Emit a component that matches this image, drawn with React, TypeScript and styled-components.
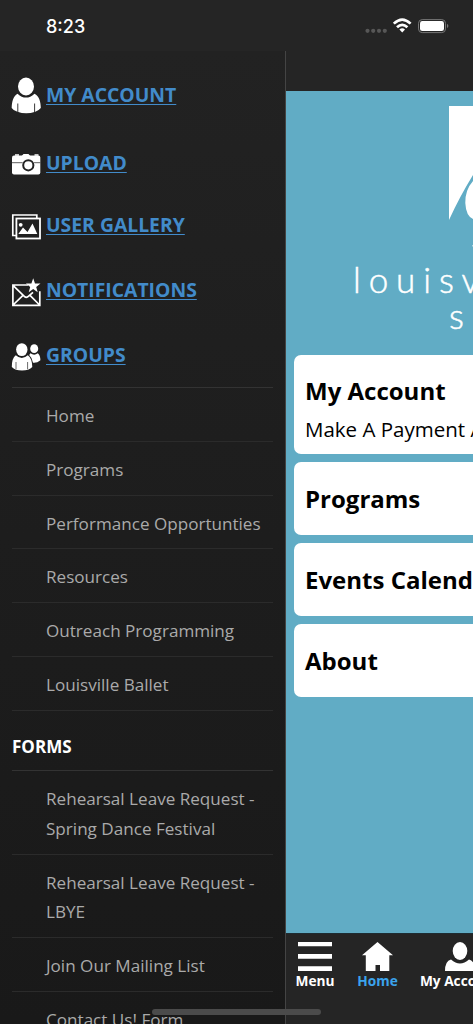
import React from "react";
import styled, { createGlobalStyle } from "styled-components";

const Global = createGlobalStyle`
  * { box-sizing: border-box; }
  body { margin: 0; background: #252525; font-family: "Open Sans", sans-serif; overflow: hidden; }
`;

const Screen = styled.div`
  position: relative;
  width: 473px;
  height: 1024px;
  overflow: hidden;
  display: flex;
  flex-direction: column;
  background: #252525;
`;

const StatusBar = styled.header`
  height: 51px;
  flex: none;
  display: flex;
  align-items: flex-start;
  justify-content: space-between;
  padding: 0 24px 0 46px;
`;

const Clock = styled.time`
  margin-top: 15px;
  font: 500 18px/24px Inter, sans-serif;
  letter-spacing: 0;
  color: #fff;
`;

const StatusIcons = styled.svg`
  display: block;
  margin-top: 16px;
  width: 84px;
  height: 20px;
`;

const Body = styled.div`
  flex: 1;
  min-height: 0;
  display: flex;
`;

const Drawer = styled.nav`
  width: 286px;
  flex: none;
  overflow: hidden;
  padding: 0 12px;
  background: linear-gradient(#222222, #1d1d1d 50%, #191919);
  border-right: 1px solid #444;
`;

const Shortcuts = styled.div`
  height: 337px;
  border-bottom: 1px solid #333;
`;

const Shortcut = styled.a<{ $h: number }>`
  height: ${(p) => p.$h}px;
  display: flex;
  align-items: center;
  color: #428bca;
  font-size: 19.35px;
  font-weight: 700;
  line-height: 28px;
  text-decoration: none;
  svg { width: 30px; height: 40px; margin-right: 4px; flex: none; overflow: visible; }
  span { padding-bottom: 1px; text-decoration: underline; text-decoration-thickness: 1px; text-underline-offset: 2px; text-decoration-skip-ink: none; }
`;

const List = styled.ul`
  list-style: none;
  margin: 0;
  padding: 0;
`;

const Entry = styled.li`
  padding: 13px 0 10px 34px;
  border-bottom: 1px solid #2b2b2b;
  color: #aaa;
  font-size: 17.1px;
  line-height: 29.75px;
  white-space: pre-line;
`;

const Heading = styled.h2`
  margin: 0;
  height: 60.5px;
  padding-top: 21px;
  border-bottom: 1px solid #333;
  color: #fff;
  font-size: 17.06px;
  line-height: 30px;
  font-weight: 700;
`;

const Main = styled.main`
  width: 473px;
  flex: none;
  display: flex;
  flex-direction: column;
`;

const Page = styled.section`
  margin-top: 40px;
  height: 842px;
  flex: none;
  background: #61acc5;
`;

const Brand = styled.div`
  height: 263.5px;
  width: 187px;
  padding-top: 15px;
  overflow: hidden;
  color: #fff;
  svg { display: block; margin-left: 163px; width: 24px; height: 155px; }
`;

const BrandLine = styled.div<{ $x: number; $gap: number }>`
  padding-left: ${(p) => p.$x}px;
  font: 300 35px/36px Lato, sans-serif;
  -webkit-text-stroke: 0.5px #fff;
  letter-spacing: ${(p) => p.$gap}px;
  white-space: nowrap;
`;

const Cards = styled.div`
  display: flex;
  flex-direction: column;
  gap: 8px;
  padding: 0 8px;
`;

const Card = styled.article<{ $tall?: boolean }>`
  height: ${(p) => (p.$tall ? 99.5 : 73)}px;
  padding: ${(p) => (p.$tall ? 18 : 19)}px 11px 0;
  border-radius: 7px;
  background: #fff;
  color: #000;
  white-space: nowrap;
  overflow: hidden;
  h3 { margin: 0; font-size: 24px; line-height: 36px; font-weight: 700; }
  p { margin: 3px 0 0; font-size: 20.5px; line-height: 34px; }
`;

const Tabs = styled.footer`
  flex: 1;
  display: flex;
  background: #252525;
  border-top: 1px solid #1e2c32;
`;

const Tab = styled.a<{ $w: number; $active?: boolean }>`
  width: ${(p) => p.$w}px;
  flex: none;
  padding-top: 6px;
  display: flex;
  flex-direction: column;
  align-items: center;
  color: ${(p) => (p.$active ? "#3ba3ec" : "#fff")};
  font-size: 13.7px;
  line-height: 20px;
  font-weight: 700;
  white-space: nowrap;
  svg { display: block; width: 34px; height: 31px; color: #fff; }
`;

const HomeIndicator = styled.div`
  position: absolute;
  left: 152px;
  top: 1009px;
  width: 169px;
  height: 6px;
  border-radius: 3px;
  background: #4b4b4b;
`;

const PersonIcon = () => (
  <svg viewBox="0 0 30 40" fill="#fff">
    <ellipse cx="14" cy="11.5" rx="8" ry="8.9" />
    <path d="M5.5 18.7Q14 26.5 22.5 18.7C27 21 28.8 26.5 28.8 33Q26.5 35.8 23.3 36.7Q14 40 5.4 36.7Q1.5 35.8 -.3 33C-.3 26.5 1.5 21 5.5 18.7Z" />
    <path d="M5.8 28.5v8.6M22.6 28.5v8.6" stroke="#222" strokeWidth=".9" />
  </svg>
);

const CameraIcon = () => (
  <svg viewBox="0 0 30 40" fill="#fff">
    <path d="M9.5 12.2 11.5 10H16.5L18.5 12.2ZM3 10.3h4v1.5H3zM22.5 10.3h4v1.5h-4z" />
    <rect x="0" y="11.5" width="28.3" height="19" rx="2" />
    <path d="M0 18.7h28.3" stroke="#333" strokeWidth=".8" />
    <circle cx="16.3" cy="21.3" r="6.3" />
    <circle cx="16.3" cy="21.3" r="5.1" stroke="#222" strokeWidth="2" />
  </svg>
);

const GalleryIcon = () => (
  <svg viewBox="0 0 30 40" fill="none" stroke="#fff">
    <path d="M4 29.5H.8V9H24.8V12" strokeWidth="1.7" />
    <rect x="4.4" y="12.5" width="23.6" height="20" strokeWidth="1.8" />
    <path d="M6.3 28 11 21.5 15.5 26 20.5 17.5 25.3 28Z" fill="#fff" stroke="none" />
    <circle cx="8.7" cy="18.8" r="1.9" fill="#fff" stroke="none" />
  </svg>
);

const NotifyIcon = () => (
  <svg viewBox="0 0 30 40" fill="none" stroke="#fff" strokeWidth="1.7">
    <path d="M16 14H.9V34.3H27.8V20.3M1 14.3 12.8 25.8Q14.2 26.8 15.7 25.8L21 21.3M1 34 11 24.3M27.6 34 18 24.3" />
    <path d="m21.2 7.3 1.8 5.1 5.5.1-4.3 3.4 1.5 5.3-4.5-3.1-4.5 3.1 1.5-5.3-4.3-3.4 5.5-.1Z" fill="#fff" stroke="none" />
  </svg>
);

const GroupsIcon = () => (
  <svg viewBox="0 0 30 40" fill="#fff">
    <ellipse cx="22.2" cy="12.7" rx="4" ry="4.4" />
    <path d="M18.5 17.3Q22.2 20 25.8 17.3Q28.4 19.5 28.4 24.3Q25 27.3 21 26.8Q20.3 21.8 17.2 19Z" />
    <ellipse cx="9.8" cy="13.6" rx="5.7" ry="6.4" />
    <path d="M3.8 19.2Q9.8 24.6 15.8 19.2Q20 22 20.3 31Q17 34.6 10 34.6Q3 34.6 -.2 31Q-.2 22 3.8 19.2Z" />
    <path d="M4 26v7.3M15.6 26v7.3" stroke="#444" strokeWidth=".8" />
  </svg>
);

const shortcuts = [
  { label: "MY ACCOUNT", h: 88, icon: <PersonIcon /> },
  { label: "UPLOAD", h: 49, icon: <CameraIcon /> },
  { label: "USER GALLERY", h: 75, icon: <GalleryIcon /> },
  { label: "NOTIFICATIONS", h: 55, icon: <NotifyIcon /> },
  { label: "GROUPS", h: 75, icon: <GroupsIcon /> },
];

const pages = ["Home", "Programs", "Performance Opportunties", "Resources", "Outreach Programming", "Louisville Ballet"];
const forms = ["Rehearsal Leave Request -\nSpring Dance Festival", "Rehearsal Leave Request -\nLBYE", "Join Our Mailing List", "Contact Us! Form"];

export default function App() {
  return (
    <Screen>
      <Global />
      <StatusBar>
        <Clock>8:23</Clock>
        <StatusIcons viewBox="0 0 84 20">
          <g fill="#575757">
            <circle cx="2.5" cy="14.8" r="2.1" /><circle cx="8.2" cy="14.8" r="2.1" /><circle cx="14" cy="14.8" r="2.1" /><circle cx="19.8" cy="14.8" r="2.1" />
          </g>
          <g fill="none" stroke="#fff" strokeWidth="2.7">
            <path d="M28.8 7.6Q37.2-.5 45.6 7.6M32 11.3Q37.2 6.3 42.4 11.3" />
            <path d="M34.4 13.6Q37.2 11.1 40 13.6L37.2 16.6Z" fill="#fff" stroke="none" />
          </g>
          <rect x="53.5" y="3.6" width="27" height="13" rx="3.7" fill="none" stroke="#777" />
          <rect x="55" y="5.1" width="24" height="10" rx="2.3" fill="#fff" />
          <path d="M82 7.8Q84.8 10 82 12.2Z" fill="#777" />
        </StatusIcons>
      </StatusBar>
      <Body>
        <Drawer>
          <Shortcuts>
            {shortcuts.map((s) => (
              <Shortcut key={s.label} $h={s.h}>{s.icon}<span>{s.label}</span></Shortcut>
            ))}
          </Shortcuts>
          <List>{pages.map((p) => <Entry key={p}>{p}</Entry>)}</List>
          <Heading>FORMS</Heading>
          <List>{forms.map((p) => <Entry key={p}>{p}</Entry>)}</List>
        </Drawer>
        <Main>
          <Page>
            <Brand>
              <svg viewBox="0 0 24 155" fill="#fff">
                <path d="M0 0H24V69Q11 90 0 114Z" />
                <path d="M24 75Q16 84 16.3 97Q17 110 24 113ZM24 139l-1 1 1 .5Z" />
              </svg>
              <BrandLine $x={67} $gap={7.9}>louisville</BrandLine>
              <BrandLine $x={163} $gap={12}>school</BrandLine>
            </Brand>
            <Cards>
              <Card $tall><h3>My Account</h3><p>Make A Payment And More</p></Card>
              <Card><h3>Programs</h3></Card>
              <Card><h3>Events Calendar</h3></Card>
              <Card><h3>About</h3></Card>
            </Cards>
          </Page>
          <Tabs>
            <Tab $w={58}>
              <svg viewBox="0 0 34 31" fill="currentColor"><path d="M0 2h34v4.3H0zM0 14h34v4.7H0zM0 26.3h34V31H0z" /></svg>
              Menu
            </Tab>
            <Tab $w={67} $active>
              <svg viewBox="0 0 34 31" fill="currentColor"><path d="M16.5 2 32 15.2H28.3V31H19V25H14.5V31H4.8V15.2H1Z" /></svg>
              Home
            </Tab>
            <Tab $w={98}>
              <svg viewBox="0 0 34 31" fill="currentColor"><ellipse cx="17" cy="11" rx="7.3" ry="9" /><path d="M8 19.5Q17 27.5 26 19.5Q32 21 32 31H2Q2 21 8 19.5Z" /></svg>
              My Account
            </Tab>
          </Tabs>
        </Main>
      </Body>
      <HomeIndicator />
    </Screen>
  );
}
